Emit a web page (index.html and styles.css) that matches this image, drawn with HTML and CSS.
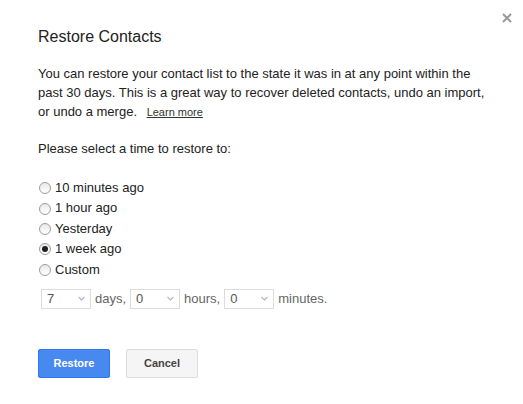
FILE: index.html
```html
<!DOCTYPE html>
<html>
<head>
<meta charset="utf-8">
<link rel="stylesheet" href="styles.css">
</head>
<body>
<div class="dialog">
  <button class="close" aria-label="Close">
    <svg width="10" height="10" viewBox="0 0 10 10"><path d="M1 1 L9 9 M9 1 L1 9" stroke="#9a9a9a" stroke-width="2" fill="none"/></svg>
  </button>
  <h1 class="title">Restore Contacts</h1>
  <p class="desc">You can restore your contact list to the state it was in at any point within the past 30 days. This is a great way to recover deleted contacts, undo an import, or undo a merge. <a class="learn" href="#">Learn more</a></p>
  <p class="prompt">Please select a time to restore to:</p>
  <div class="options">
    <label class="opt"><span class="radio"></span>10 minutes ago</label>
    <label class="opt"><span class="radio"></span>1 hour ago</label>
    <label class="opt"><span class="radio"></span>Yesterday</label>
    <label class="opt"><span class="radio checked"></span>1 week ago</label>
    <label class="opt"><span class="radio"></span>Custom</label>
  </div>
  <div class="custom">
    <div class="sel"><span>7</span><svg width="7" height="5" viewBox="0 0 7 5"><path d="M0.5 0.8 L3.5 4 L6.5 0.8" stroke="#b8b8b8" stroke-width="1.2" fill="none"/></svg></div>
    <span class="unit">days,</span>
    <div class="sel"><span>0</span><svg width="7" height="5" viewBox="0 0 7 5"><path d="M0.5 0.8 L3.5 4 L6.5 0.8" stroke="#b8b8b8" stroke-width="1.2" fill="none"/></svg></div>
    <span class="unit">hours,</span>
    <div class="sel"><span>0</span><svg width="7" height="5" viewBox="0 0 7 5"><path d="M0.5 0.8 L3.5 4 L6.5 0.8" stroke="#b8b8b8" stroke-width="1.2" fill="none"/></svg></div>
    <span class="unit">minutes.</span>
  </div>
  <div class="buttons">
    <button class="btn primary">Restore</button>
    <button class="btn">Cancel</button>
  </div>
</div>
</body>
</html>
```
FILE: styles.css
```css
html, body {
  margin: 0;
  padding: 0;
  background: #fff;
}
body {
  font-family: Arial, "Liberation Sans", sans-serif;
  color: #222;
  font-size: 13px;
}
.dialog {
  position: relative;
  padding: 27px 38px 0 38px;
  width: 523px;
  height: 404px;
  box-sizing: border-box;
}
.close {
  position: absolute;
  top: 13px;
  left: 502px;
  width: 10px;
  height: 10px;
  padding: 0;
  border: 0;
  background: none;
  display: flex;
}
.title {
  margin: 0;
  font-size: 16px;
  font-weight: normal;
  line-height: 20px;
  color: #222;
}
.desc {
  margin: 17px 0 0 0;
  width: 450px;
  line-height: 19px;
}
.learn {
  font-size: 11px;
  color: #333;
  text-decoration: underline;
  margin-left: 6px;
}
.prompt {
  margin: 17px 0 0 0;
  line-height: 19px;
}
.options {
  margin-top: 20px;
  display: flex;
  flex-direction: column;
}
.opt {
  display: flex;
  align-items: center;
  height: 20.4px;
  line-height: 20.4px;
}
.radio {
  width: 12px;
  height: 12px;
  box-sizing: border-box;
  border: 1px solid #9c9c9c;
  border-radius: 50%;
  background: linear-gradient(#e9e9e9, #ffffff);
  margin-left: 1px;
  margin-right: 4px;
  display: flex;
  align-items: center;
  justify-content: center;
}
.radio.checked::after {
  content: "";
  width: 6px;
  height: 6px;
  border-radius: 50%;
  background: #1e1e1e;
}
.custom {
  margin-top: 9px;
  margin-left: 3px;
  display: flex;
  align-items: center;
  gap: 4px;
  color: #666;
}
.sel {
  width: 50px;
  height: 20px;
  box-sizing: border-box;
  border: 1px solid #dcdcdc;
  display: flex;
  align-items: center;
  justify-content: space-between;
  padding: 0 5px 0 5px;
  color: #555;
}
.unit {
  line-height: 20px;
}
.buttons {
  margin-top: 40px;
  display: flex;
  gap: 16px;
}
.btn {
  width: 72px;
  height: 29px;
  box-sizing: border-box;
  border: 1px solid #dcdcdc;
  border-radius: 2px;
  background: #f5f5f5;
  color: #444;
  font-family: Arial, "Liberation Sans", sans-serif;
  font-size: 11px;
  font-weight: bold;
  padding: 0;
}
.btn.primary {
  background: #4889f0;
  border-color: #3079ed;
  color: #fff;
}
```
